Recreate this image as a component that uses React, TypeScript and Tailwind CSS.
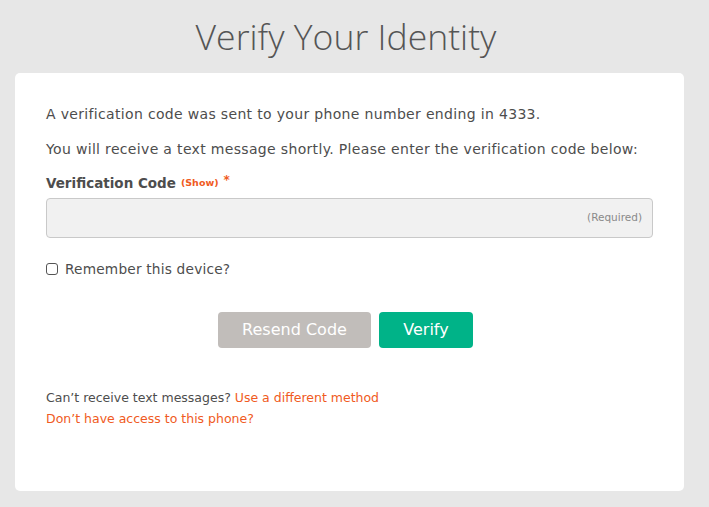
import React from "react";

export default function App() {
  return (
    <div
      className="min-h-[507px] w-full bg-[#e7e7e7] pl-[15px] pr-[25px] pt-[14px] pb-[16px] text-[#4d4d4d]"
      style={{ fontFamily: '"DejaVu Sans", sans-serif' }}
    >
      <h1
        className="pr-[7px] text-center text-[35.6px] font-light leading-[44px] text-[#555555]"
        style={{ fontFamily: '"Open Sans", sans-serif' }}
      >
        Verify Your Identity
      </h1>
      <div className="mt-[15px] h-[418px] rounded-[5px] bg-white px-[31px] pt-[28px]">
        <p className="text-[14px] leading-[26px] tracking-[0.33px]">
          A verification code was sent to your phone number ending in 4333.
        </p>
        <p className="mt-[9px] text-[14px] leading-[26px] tracking-[0.33px]">
          You will receive a text message shortly. Please enter the verification code below:
        </p>
        <div className="mt-[10px] flex items-center text-[13.5px] font-bold leading-[22px]">
          <span>Verification Code</span>
          <span className="ml-[5px] text-[9.5px] font-bold text-[#f05a22]">(Show)</span>
          <span className="ml-[5px] -mt-[6px] text-[12px] text-[#f05a22]">*</span>
        </div>
        <div className="mt-[4px] flex h-[40px] w-full items-center justify-end rounded-[4px] border border-[#c9c9c9] bg-[#f1f1f1] px-[10px]">
          <span className="text-[10.5px] text-[#8a8a8a]">(Required)</span>
        </div>
        <label className="mt-[21px] flex items-center gap-[7px] text-[13.7px] tracking-[0.2px]">
          <span className="h-[12px] w-[12px] rounded-[3px] border border-[#555] bg-white" />
          Remember this device?
        </label>
        <div className="mt-[32px] flex justify-center gap-[8px] pr-[8px]">
          <button className="h-[36px] w-[153px] rounded-[4px] bg-[#c1bdba] text-[16px] text-white">
            Resend Code
          </button>
          <button className="h-[36px] w-[94px] rounded-[4px] bg-[#00b388] text-[16px] text-white">
            Verify
          </button>
        </div>
        <div className="mt-[39px] text-[12.5px] leading-[21px]">
          <div>
            Can’t receive text messages?{" "}
            <span className="text-[#f05a22]">Use a different method</span>
          </div>
          <div className="text-[#f05a22]">Don’t have access to this phone?</div>
        </div>
      </div>
    </div>
  );
}
